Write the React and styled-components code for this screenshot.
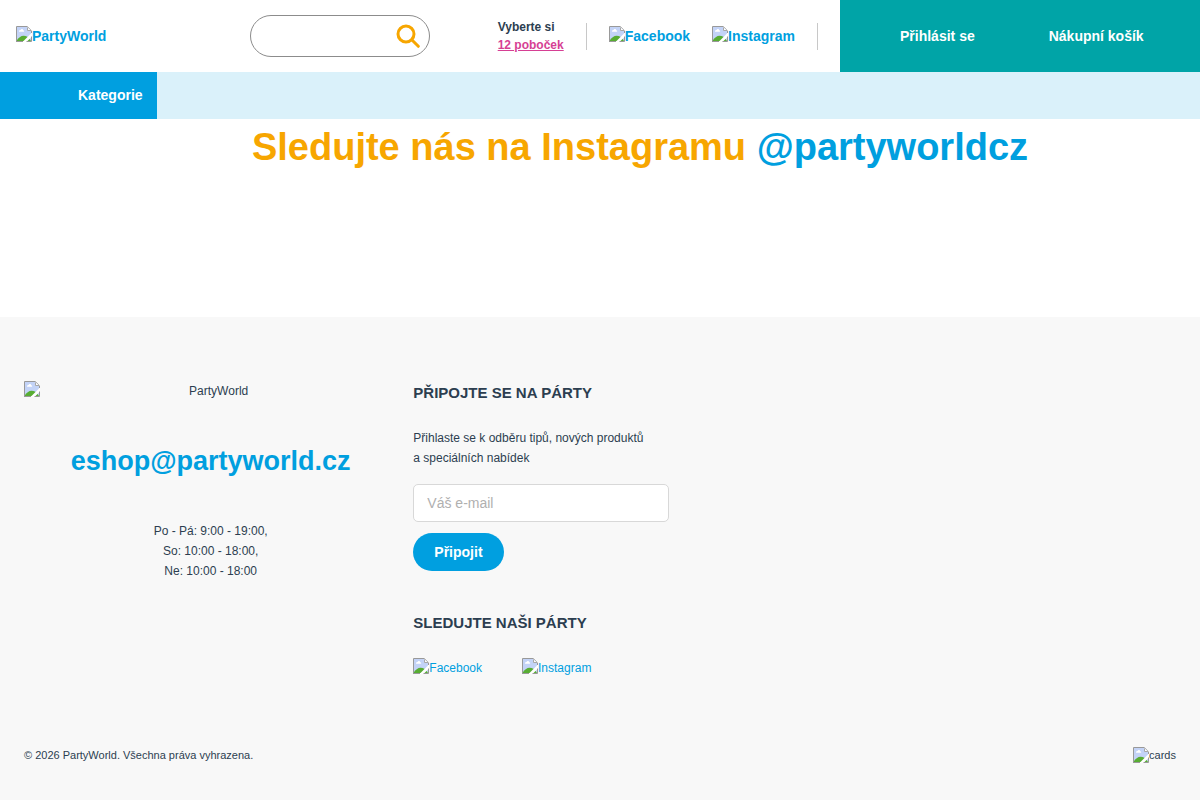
import React, { useState } from 'react'
import styled, { createGlobalStyle } from 'styled-components'

function BrokenImage() {
    return (
        <Icon width="16" height="16" viewBox="0 0 16 16" aria-hidden="true">
            <path d="M1 1H11L15 5V15H1Z" fill="#c3d3f7" />
            <path d="M3 5.4C3 4.2 4 4 4.5 4C5 2.6 7 2.8 7.2 4.2C8.4 4.2 8.6 5.8 7.6 5.8H3.4C3.1 5.8 3 5.6 3 5.4Z" fill="#fff" />
            <path d="M1 15V14C3 11.5 5 9.8 7.5 9.8C10.5 9.8 12.5 11.5 14 13.5L15 15Z" fill="#58ad33" />
            <path d="M16 6.5V10.5L10.5 16H6.5Z" fill="#fff" />
            <path d="M0.5 16V0.5H11.2L15.5 4.8V7M0 15.5H7M10.5 15.5H15.5V10.5" fill="none" stroke="#999" />
            <path d="M11.5 1.5V4.5H15" fill="#fff" stroke="#a8a8a8" />
        </Icon>
    );
}

function Header() {
    const [search, setSearch] = useState('');

    return (
        <HeaderBar>
            <LogoLink href="#"><BrokenImage />PartyWorld</LogoLink>
            <SearchForm onSubmit={(e) => e.preventDefault()}>
                <SearchInput aria-label="Hledat" value={search} onChange={(e) => setSearch(e.target.value)} />
                <SearchButton type="submit" aria-label="Hledat">
                    <svg width="24" height="24" viewBox="0 0 24 24" fill="none" stroke="#f7a600" strokeWidth="3" strokeLinecap="round">
                        <circle cx="10" cy="10" r="8" />
                        <path d="M16 16L22.3 22.3" />
                    </svg>
                </SearchButton>
            </SearchForm>
            <Contacts>
                <Branches>
                    Vyberte si
                    <BranchLink href="#">12 poboček</BranchLink>
                </Branches>
                <Divider />
                <ImageLink href="#"><BrokenImage />Facebook</ImageLink>
                <ImageLink href="#"><BrokenImage />Instagram</ImageLink>
                <Divider />
            </Contacts>
            <UserPanel>
                <UserLink href="#">Přihlásit se</UserLink>
                <UserLink href="#">Nákupní košík</UserLink>
            </UserPanel>
        </HeaderBar>
    );
}

function Footer() {
    const [email, setEmail] = useState('');

    return (
        <FooterArea>
            <Columns>
                <Company>
                    <FooterLogo><BrokenImage /><span>PartyWorld</span></FooterLogo>
                    <EmailLink href="mailto:eshop@partyworld.cz">eshop@partyworld.cz</EmailLink>
                    <Hours>
                        Po - Pá: 9:00 - 19:00,<br />
                        So: 10:00 - 18:00,<br />
                        Ne: 10:00 - 18:00
                    </Hours>
                </Company>
                <div>
                    <FooterTitle>PŘIPOJTE SE NA PÁRTY</FooterTitle>
                    <NewsletterForm onSubmit={(e) => e.preventDefault()}>
                        <NewsletterLabel htmlFor="email">
                            Přihlaste se k odběru tipů, nových produktů a&nbsp;speciálních nabídek
                        </NewsletterLabel>
                        <EmailInput id="email" type="email" placeholder="Váš e-mail" value={email} onChange={(e) => setEmail(e.target.value)} />
                        <JoinButton type="submit">Připojit</JoinButton>
                    </NewsletterForm>
                    <FooterTitle>SLEDUJTE NAŠI PÁRTY</FooterTitle>
                    <Socials>
                        <ImageLink href="#"><BrokenImage />Facebook</ImageLink>
                        <ImageLink href="#"><BrokenImage />Instagram</ImageLink>
                    </Socials>
                </div>
            </Columns>
            <Bottom>
                <span>© 2026 PartyWorld. Všechna práva vyhrazena.</span>
                <Cards><BrokenImage />cards</Cards>
            </Bottom>
        </FooterArea>
    );
}

function App() {
    return (
        <Page>
            <GlobalStyle />
            <Header />
            <Navigation>
                <CategoryButton type="button">Kategorie</CategoryButton>
            </Navigation>
            <Main>
                <Title>Sledujte nás na Instagramu <TitleLink href="#">@partyworldcz</TitleLink></Title>
            </Main>
            <Footer />
        </Page>
    );
}

const GlobalStyle = createGlobalStyle`
    * {
        box-sizing: border-box;
    }
    body {
        margin: 0;
        background: #fff;
        color: #2c3e50;
        font-family: "Liberation Sans", Arial, sans-serif;
        font-size: 12px;
        line-height: 20px;
    }
    a {
        color: #009fdf;
        text-decoration: none;
    }
    button, input {
        font-family: inherit;
        font-size: 14px;
    }
    button {
        border: none;
        padding: 0;
        cursor: pointer;
    }
`

const Page = styled.div`
    display: flex;
    flex-direction: column;
    min-height: 100vh;
`

const Icon = styled.svg`
    flex: none;
    display: block;
`

const HeaderBar = styled.header`
    display: grid;
    grid-template-columns: 1fr 180px auto 30%;
    align-items: center;
    height: 72px;
    font-size: 14px;
    font-weight: bold;
`

const ImageLink = styled.a`
    display: flex;
    align-items: flex-start;
`

const LogoLink = styled(ImageLink)`
    padding-left: 16px;
`

const SearchForm = styled.form`
    display: flex;
    align-items: center;
    height: 42px;
    padding: 0 9px 0 20px;
    border: 1px solid #8c8c8c;
    border-radius: 21px;
`

const SearchInput = styled.input`
    flex: 1;
    min-width: 0;
    border: none;
    outline: none;
    background: transparent;
`

const SearchButton = styled.button`
    width: 24px;
    height: 24px;
    background: none;
`

const Contacts = styled.div`
    display: flex;
    align-items: center;
    gap: 22px;
    padding: 0 22px 0 68px;
`

const Branches = styled.div`
    display: flex;
    flex-direction: column;
    font-size: 12px;
    line-height: 18px;
`

const BranchLink = styled.a`
    color: #d63f94;
    text-decoration: underline;
`

const Divider = styled.div`
    width: 1px;
    height: 27px;
    background: #c8c8c8;
`

const UserPanel = styled.div`
    display: flex;
    gap: 74px;
    align-items: center;
    height: 100%;
    padding-left: 60px;
    background: #00a4a7;
`

const UserLink = styled.a`
    color: #fff;
`

const Navigation = styled.nav`
    display: flex;
    height: 47px;
    background: #daf1fa;
`

const CategoryButton = styled.button`
    padding: 0 14px 2px 78px;
    background: #009fe0;
    color: #fff;
    font-weight: bold;
`

const Main = styled.main`
    min-height: 198px;
    padding-left: 80px;
`

const Title = styled.h1`
    margin: 0;
    padding-top: 4px;
    color: #f7a600;
    font-size: 38px;
    line-height: 48px;
    text-align: center;
`

const TitleLink = styled.a`
    color: #009fdf;
`

const FooterArea = styled.footer`
    flex: 1;
    padding: 64px 24px 32px;
    background: #f8f8f8;
`

const Columns = styled.div`
    display: grid;
    grid-template-columns: repeat(3, 1fr);
    gap: 16px;
`

const Company = styled.div`
    text-align: center;
`

const FooterLogo = styled.div`
    display: flex;

    span {
        flex: 1;
    }
`

const EmailLink = styled.a`
    display: block;
    margin: 40px 0;
    font-size: 27px;
    font-weight: bold;
    line-height: 40px;
`

const Hours = styled.p`
    margin: 0;
`

const FooterTitle = styled.h2`
    margin: 0 0 23px;
    font-size: 15px;
    line-height: 24px;
`

const NewsletterForm = styled.form`
    display: flex;
    flex-direction: column;
    align-items: flex-start;
    width: 256px;
    margin-bottom: 40px;
`

const NewsletterLabel = styled.label`
    margin-bottom: 16px;
`

const EmailInput = styled.input`
    width: 100%;
    height: 38px;
    margin-bottom: 11px;
    padding: 0 13px;
    border: 1px solid #d8d8d8;
    border-radius: 5px;
    background: #fff;

    &::placeholder {
        color: #b0b0b0;
    }
`

const JoinButton = styled.button`
    height: 38px;
    padding: 0 21px;
    border-radius: 19px;
    background: #009fe0;
    color: #fff;
    font-weight: bold;
`

const Socials = styled.div`
    display: flex;
    gap: 40px;
`

const Bottom = styled.div`
    display: flex;
    justify-content: space-between;
    margin-top: 67px;
    font-size: 11px;
`

const Cards = styled.span`
    display: flex;
    align-items: center;
`

export default App;
